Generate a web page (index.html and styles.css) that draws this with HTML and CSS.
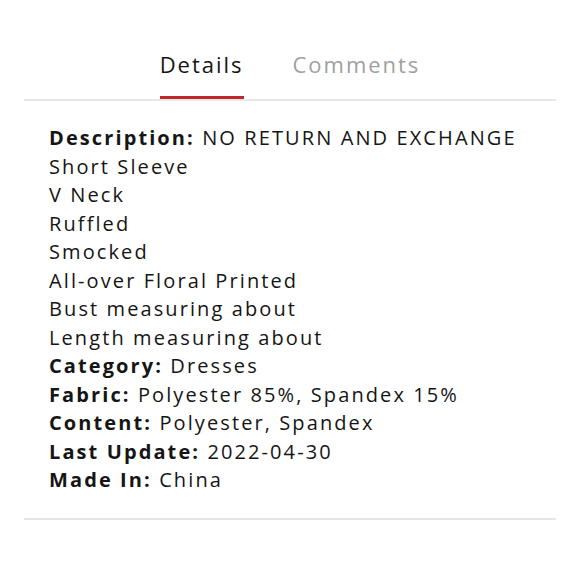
FILE: index.html
```html
<!doctype html>
<html lang="en">
  <head>
    <meta charset="UTF-8" />
    <meta name="viewport" content="width=device-width, initial-scale=1.0" />
    <title>Details</title>
    <link rel="stylesheet" href="styles.css">
  </head>
  <body>
    <div class="container">
      <!-- tabs -->
      <div class="tabs">
        <div class="tab active">Details</div>
        <div class="tab">Comments</div>
      </div>

      <!-- details -->
      <div class="details">
        <div class="row"><b>Description:</b> NO RETURN AND EXCHANGE</div>
        <div class="row">Short Sleeve</div>
        <div class="row">V Neck</div>
        <div class="row">Ruffled</div>
        <div class="row">Smocked</div>
        <div class="row">All-over Floral Printed</div>
        <div class="row">Bust measuring about</div>
        <div class="row">Length measuring about</div>
        <div class="row"><b>Category:</b> Dresses</div>
        <div class="row"><b>Fabric:</b> Polyester 85%, Spandex 15%</div>
        <div class="row"><b>Content:</b> Polyester, Spandex</div>
        <div class="row"><b>Last Update:</b> 2022-04-30</div>
        <div class="row"><b>Made In:</b> China</div>
      </div>

      <div class="divider"></div>
    </div>
  </body>
</html>
```

FILE: styles.css
```css
* {
  margin: 0;
  padding: 0;
  box-sizing: border-box;
}

body {
  font-family: 'Open Sans', 'Noto Sans', sans-serif;
  background: #fff;
  color: #151515;
}

.container {
  padding: 49px 24px 0;
}

/* tabs */
.tabs {
  display: flex;
  justify-content: center;
  gap: 49px;
  border-bottom: 2px solid #e8e8e8;
}

.tab {
  font-size: 22px;
  line-height: 30px;
  letter-spacing: 0.09em;
  padding-bottom: 17px;
  border-bottom: 3px solid transparent;
  color: #a0a0a0;
}

.tab.active {
  color: #151515;
  border-bottom-color: #c0272d;
}

/* details */
.details {
  padding: 23px 25px 0;
  font-size: 20px;
  line-height: 28.5px;
  letter-spacing: 0.105em;
}

.details b {
  font-weight: 700;
}

.divider {
  height: 2px;
  background: #e6e6e6;
  margin-top: 23px;
}
```
